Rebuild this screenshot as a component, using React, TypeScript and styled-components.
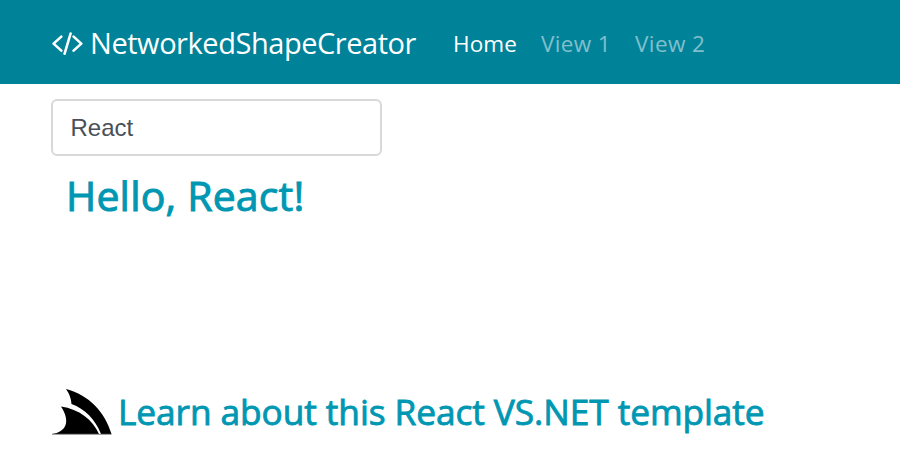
import React, { useState } from "react";
import styled, { createGlobalStyle } from "styled-components";

const GlobalStyle = createGlobalStyle`
  * { box-sizing: border-box; }
  body { margin: 0; background: #fff; font-family: "Open Sans", "Noto Sans", sans-serif; }
`;

const Page = styled.div`
  height: 450px;
  overflow: hidden;
  display: flex;
  flex-direction: column;
`;

const Navbar = styled.nav`
  height: 84px;
  flex: none;
  background: #008299;
  display: flex;
  align-items: center;
  padding: 4px 0 0 52px;
`;

const Brand = styled.a`
  display: flex;
  align-items: center;
  color: #fff;
  width: 401px;
  padding-bottom: 2px;
`;

const CodeIcon = styled.svg`
  width: 31px;
  height: 24px;
  margin-right: 7px;
`;

const Text = styled.span<{ $size: number; $spacing?: number; $stroke?: number }>`
  font-size: ${(p) => p.$size}px;
  font-weight: 400;
  -webkit-text-stroke: ${(p) => p.$stroke ?? 0}px currentColor;
  letter-spacing: ${(p) => p.$spacing ?? 0}px;
  line-height: 40px;
  white-space: nowrap;
`;

const NavLink = styled.a<{ $active?: boolean; $width: number }>`
  width: ${(p) => p.$width}px;
  color: ${(p) => (p.$active ? "#fff" : "rgba(255,255,255,0.5)")};
`;

const Main = styled.main`
  display: flex;
  flex-direction: column;
  align-items: flex-start;
  padding: 15px 0 0 51px;
`;

const NameInput = styled.input`
  width: 331px;
  height: 57px;
  border: 2px solid #d8d8d8;
  border-radius: 6px;
  padding: 0 17.5px;
  font: 24px "Liberation Sans", Arial, sans-serif;
  color: #495057;
  outline: none;
`;

const Greeting = styled.h1`
  margin: 19px 0 0 15px;
  height: 40px;
  color: #0097b3;
  display: flex;
`;

const LearnLink = styled.a`
  margin-top: 173px;
  display: flex;
  align-items: flex-start;
  color: #0097b3;
`;

const LearnTitle = styled.span`
  display: flex;
  padding-top: 3px;
`;

const Logo = styled.svg`
  width: 61px;
  height: 48px;
  margin-right: 6px;
`;

export default function App() {
  const [name, setName] = useState("React");
  return (
    <Page>
      <GlobalStyle />
      <Navbar>
        <Brand>
          <CodeIcon viewBox="0 0 31 24" fill="none" stroke="#fff" strokeWidth="2.6" strokeLinecap="round" strokeLinejoin="round">
            <path d="M9.3 5.6 1.6 12.6l7.7 7M21.6 5.6l7.7 7-7.7 7M18.6 2.5l-6 20.2" />
          </CodeIcon>
          <Text $size={29} $spacing={-0.45}>NetworkedShapeCreator</Text>
        </Brand>
        <NavLink $active $width={88}><Text $size={22.5} $spacing={0.1}>Home</Text></NavLink>
        <NavLink $width={94}><Text $size={22.5} $spacing={0.35}>View 1</Text></NavLink>
        <NavLink $width={80}><Text $size={22.5} $spacing={0.4}>View 2</Text></NavLink>
      </Navbar>
      <Main>
        <NameInput value={name} onChange={(e) => setName(e.target.value)} />
        <Greeting><Text $size={41} $stroke={1} $spacing={0.18}>Hello, {name}!</Text></Greeting>
        <LearnLink>
          <Logo viewBox="0 0 61 48">
            <path d="M15 1C38 7 54 24 60.5 46H50C44 31 34 21 20.5 16Q20 8 15 1Z" />
            <path d="M10 18.5C28 21 42 32 48 46H1C15 44 20 34 10 18.5Z" />
            <path d="M1 46.3H60.5" stroke="#888" strokeWidth="1" />
          </Logo>
          <LearnTitle>
            <Text $size={35.3} $stroke={0.85} $spacing={-0.09}>Learn about this React VS.NET template</Text>
          </LearnTitle>
        </LearnLink>
      </Main>
    </Page>
  );
}
